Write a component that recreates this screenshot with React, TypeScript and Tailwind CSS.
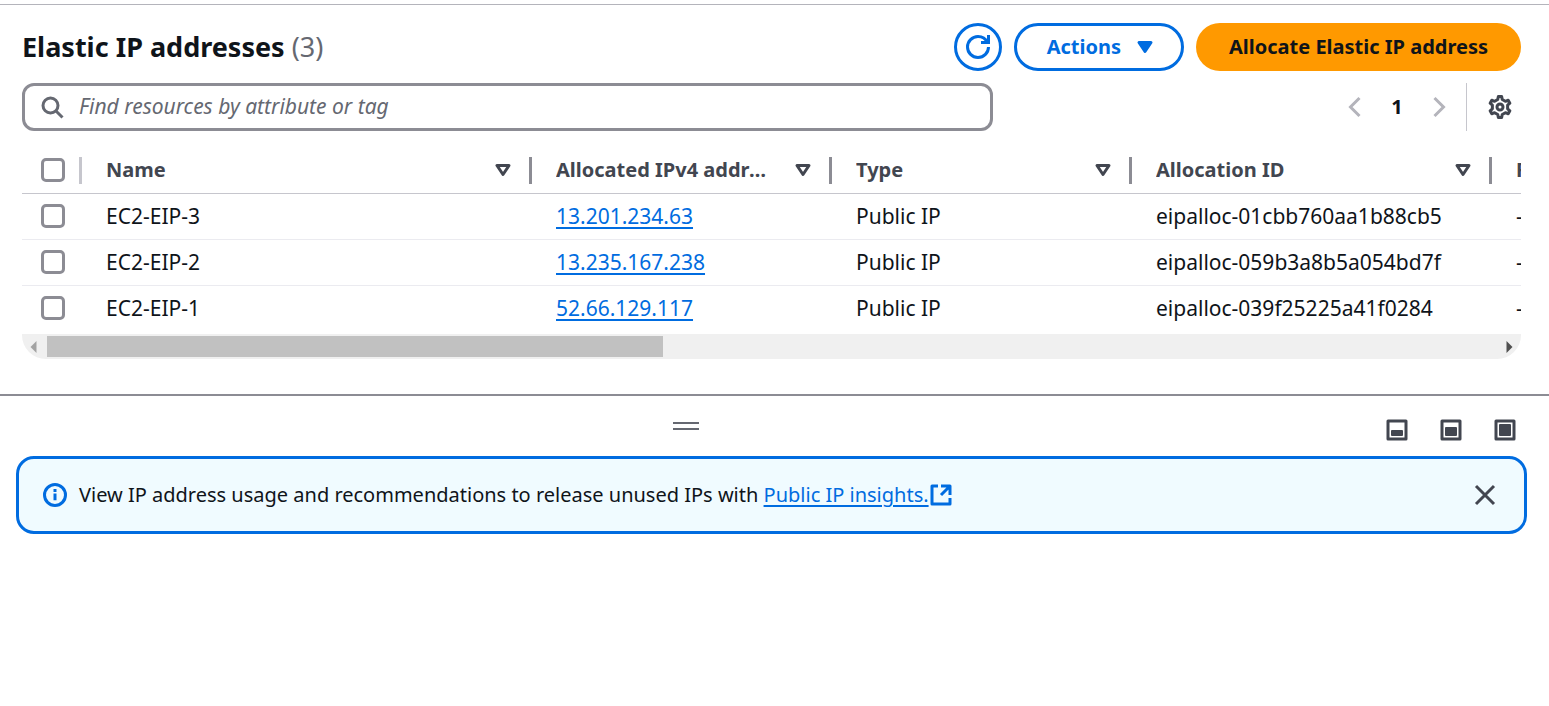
import React from "react";

const rows = [
  { name: "EC2-EIP-3", ip: "13.201.234.63", type: "Public IP", id: "eipalloc-01cbb760aa1b88cb5" },
  { name: "EC2-EIP-2", ip: "13.235.167.238", type: "Public IP", id: "eipalloc-059b3a8b5a054bd7f" },
  { name: "EC2-EIP-1", ip: "52.66.129.117", type: "Public IP", id: "eipalloc-039f25225a41f0284" },
];

const columns = ["Name", "Allocated IPv4 address", "Type", "Allocation ID", "Reverse DNS record"];

function Icon({ children, className = "" }: { children: React.ReactNode; className?: string }) {
  return (
    <svg
      viewBox="0 0 16 16"
      className={`size-6 shrink-0 overflow-visible ${className}`}
      fill="none"
      stroke="currentColor"
      strokeWidth="2"
      aria-hidden="true"
    >
      {children}
    </svg>
  );
}

function Checkbox({ label }: { label: string }) {
  return (
    <input
      type="checkbox"
      aria-label={label}
      className="block size-6 appearance-none rounded-[5px] border-3 border-[#8c8c94] bg-white checked:bg-[#006ce0]"
    />
  );
}

function PanelButton({ label, top }: { label: string; top: number }) {
  return (
    <button aria-label={label} className="text-[#424650]">
      <Icon>
        <path d="M2 2h12v12H2z" strokeLinejoin="round" />
        <rect x="4" y={top} width="8" height={12 - top} rx="0.6" fill="currentColor" stroke="none" />
      </Icon>
    </button>
  );
}

function Toolbar() {
  return (
    <div className="flex items-center justify-between">
      <h1 className="text-[27px] leading-8 font-bold text-[#0f141a]">
        Elastic IP addresses <span className="font-normal text-[#656871]">(3)</span>
      </h1>
      <div className="flex gap-3 text-xl font-bold">
        <button
          aria-label="Refresh"
          className="flex size-12 items-center justify-center rounded-full border-3 border-[#006ce0] text-[#006ce0]"
        >
          <Icon>
            <path d="M15 8c0 3.87-3.13 7-7 7s-7-3.13-7-7 3.13-7 7-7c2.79 0 5.2 1.63 6.33 4" />
            <path d="M10 5h5V0" />
          </Icon>
        </button>
        <button className="flex h-12 items-center gap-3 rounded-full border-3 border-[#006ce0] pr-6 pl-[30px] text-[#006ce0]">
          Actions
          <Icon>
            <path d="M4 5h8l-4 6z" fill="currentColor" strokeLinejoin="round" />
          </Icon>
        </button>
        <button className="h-12 rounded-full bg-[#ff9900] px-[33px] text-[#0f141a]">Allocate Elastic IP address</button>
      </div>
    </div>
  );
}

function FilterBar() {
  return (
    <div className="mt-3 flex items-center justify-between">
      <label className="flex h-12 w-[64.8%] items-center gap-[15px] rounded-xl border-3 border-[#8c8c94] pr-4 pl-[15px] text-[#656871]">
        <Icon>
          <circle cx="7" cy="7" r="5" />
          <path d="m15 15-4.5-4.5" />
        </Icon>
        <input
          type="search"
          aria-label="Find resources by attribute or tag"
          placeholder="Find resources by attribute or tag"
          className="min-w-0 flex-1 text-[21px] italic outline-none placeholder:text-[#656871]"
        />
      </label>
      <div className="flex items-center pr-[9px]">
        <button aria-label="Previous page" className="text-[#b4b4bb]">
          <Icon>
            <path d="M11 2 5 8l6 6" />
          </Icon>
        </button>
        <button className="w-[60px] text-xl font-bold text-[#0f141a]">1</button>
        <button aria-label="Next page" className="text-[#b4b4bb]">
          <Icon>
            <path d="m5 2 6 6-6 6" />
          </Icon>
        </button>
        <div className="mr-[21px] ml-[15px] h-12 w-px bg-[#c6c6cd]" />
        <button aria-label="Preferences" className="text-[#424650]">
          <Icon>
            <path
              d="M6.5 3 6.9 1h2.2l.4 2 2.08 1.2 1.9-.7 1.1 1.95L13.08 6.8v2.4l1.5 1.35-1.1 1.95-1.9-.7L9.5 13l-.4 2H6.9l-.4-2-2.08-1.2-1.9.7-1.1-1.95L2.92 9.2V6.8l-1.5-1.35 1.1-1.95 1.9.7z"
              strokeLinejoin="round"
            />
            <circle cx="8" cy="8" r="2" />
          </Icon>
        </button>
      </div>
    </div>
  );
}

function AddressTable() {
  return (
    <div className="mt-[17px] overflow-hidden">
      <table className="w-[1800px] table-fixed border-collapse text-left text-[#0f141a]">
        <colgroup>
          <col className="w-[60px]" />
          <col className="w-[450px]" />
          <col className="w-[300px]" />
          <col className="w-[300px]" />
          <col className="w-[360px]" />
          <col className="w-[330px]" />
        </colgroup>
        <thead>
          <tr className="h-[45px] border-b border-[#c6c6cd] text-xl text-[#424650]">
            <th className="p-0">
              <div className="flex h-[27px] items-center border-r-3 border-[#c6c6cd] pl-[19px]">
                <Checkbox label="Select all" />
              </div>
            </th>
            {columns.map((column) => (
              <th key={column} className="p-0 font-bold">
                <div className="flex h-[27px] items-center gap-4 border-r-3 border-[#8c8c94] pr-[14px] pl-6">
                  <span className="min-w-0 flex-1 truncate">{column}</span>
                  <button aria-label={`Sort by ${column}`}>
                    <Icon>
                      <path d="M4 5h8l-4 6z" strokeLinejoin="round" />
                    </Icon>
                  </button>
                </div>
              </th>
            ))}
          </tr>
        </thead>
        <tbody className="text-[21px] leading-7">
          {rows.map((row) => (
            <tr key={row.name} className="h-[46px] border-b border-[#ebebf0] last:border-b-0">
              <td className="p-0 pl-[19px]">
                <Checkbox label={`Select ${row.name}`} />
              </td>
              <td className="p-0 pl-6">{row.name}</td>
              <td className="p-0 pl-6">
                <a href="#" className="text-[#006ce0] underline decoration-2 underline-offset-3">
                  {row.ip}
                </a>
              </td>
              <td className="p-0 pl-6">{row.type}</td>
              <td className="p-0 pl-6">{row.id}</td>
              <td className="p-0 pl-6">-</td>
            </tr>
          ))}
        </tbody>
      </table>
      <div className="mt-[3px] flex h-[25px] items-center gap-1.5 rounded-b-3xl bg-[#f0f0f0] px-2">
        <svg viewBox="0 0 6 12" className="h-3 w-[7px] text-[#a3a3a3]" fill="currentColor" aria-hidden="true">
          <path d="M6 0v12L0 6z" />
        </svg>
        <div className="flex flex-1 px-1">
          <div className="h-[21px] w-[42.5%] bg-[#c1c1c1]" />
        </div>
        <svg viewBox="0 0 6 12" className="h-3 w-[7px] text-[#505050]" fill="currentColor" aria-hidden="true">
          <path d="M0 0v12l6-6z" />
        </svg>
      </div>
    </div>
  );
}

function SplitPanel() {
  return (
    <section className="mt-[35px] border-t-2 border-[#8c8c94]">
      <div className="flex h-[60px] items-center pr-8 pl-4">
        <div className="flex flex-1 justify-center">
          <button aria-label="Resize panel" className="flex h-2 w-[26px] flex-col justify-between">
            <span className="block h-0.5 w-full bg-[#656871]" />
            <span className="block h-0.5 w-full bg-[#656871]" />
          </button>
        </div>
        <div className="ml-[30px] flex gap-[30px] pt-2">
          <PanelButton label="Small panel" top={8} />
          <PanelButton label="Medium panel" top={6} />
          <PanelButton label="Full panel" top={4} />
        </div>
      </div>
      <div className="mr-[22px] ml-4 flex h-[78px] items-center rounded-[18px] border-3 border-[#006ce0] bg-[#f0fbff] pr-[27px] pl-6 text-xl text-[#0f141a]">
        <Icon className="mr-3 text-[#006ce0]">
          <circle cx="8" cy="8" r="7" />
          <path d="M8 11.5V7M8 6V4" />
        </Icon>
        <p>
          View IP address usage and recommendations to release unused IPs with{" "}
          <a href="#" className="text-[#006ce0] underline decoration-2 underline-offset-3">
            Public IP insights.
          </a>
        </p>
        <Icon className="text-[#006ce0]">
          <path d="M14 10v4H2V2h4M8 2h6v6M14 2 8 8" strokeLinejoin="round" />
        </Icon>
        <button aria-label="Dismiss" className="ml-auto text-[#424650]">
          <Icon>
            <path d="m2 2 12 12M14 2 2 14" />
          </Icon>
        </button>
      </div>
    </section>
  );
}

export default function App() {
  return (
    <main className="min-h-screen bg-white pt-1 font-['Noto_Sans',sans-serif]">
      <div className="border-t border-[#b4b4bb] pt-[18px]">
        <div className="mr-7 ml-[22px]">
          <Toolbar />
          <FilterBar />
          <AddressTable />
        </div>
        <SplitPanel />
      </div>
    </main>
  );
}
